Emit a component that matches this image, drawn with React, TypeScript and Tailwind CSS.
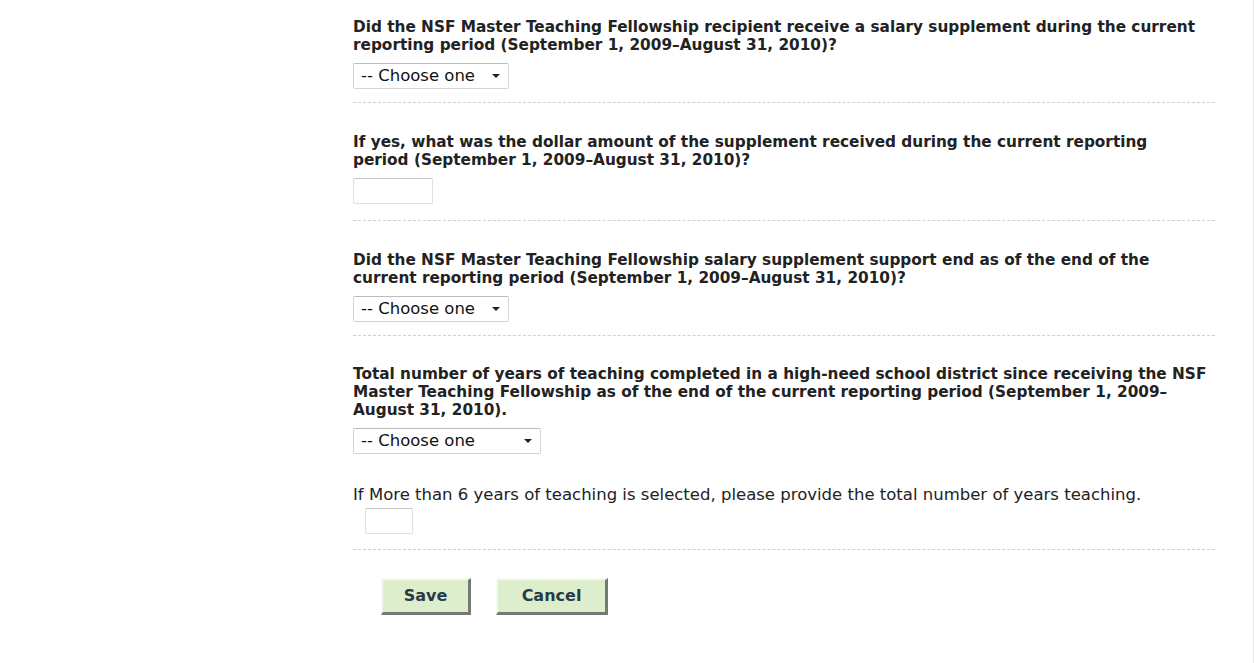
import React from "react";

// Fellowship salary questions – report form section

const FONT = { fontFamily: '"DejaVu Sans", Verdana, sans-serif' };

function ChooseSelect({ width }: { width: string }) {
  return (
    <div className={`relative h-[26px] ${width}`}>
      <select
        defaultValue=""
        className="h-full w-full appearance-none rounded-[2px] border border-[#d4d4d4] border-t-[#bdbdbd] bg-white pl-[7px] text-[16.5px] text-[#111] outline-none"
      >
        <option value="">-- Choose one</option>
        <option>Yes</option>
        <option>No</option>
      </select>
      <span className="pointer-events-none absolute right-[9px] top-[11px] h-0 w-0 border-x-[4px] border-t-[4px] border-x-transparent border-t-[#222]" />
    </div>
  );
}

function TextBox({ width }: { width: string }) {
  return (
    <input
      type="text"
      className={`h-[26px] ${width} rounded-[2px] border border-[#dde0e4] border-t-[#c4c4c4] bg-white outline-none`}
    />
  );
}

function Question({ children }: { children: React.ReactNode }) {
  return <p className="text-[15.3px] font-bold leading-[18px] text-[#222]">{children}</p>;
}

function FormButton({ label, width }: { label: string; width: string }) {
  return (
    <button
      className={`h-[37px] ${width} border-[2px] border-b-[3px] border-r-[3px] border-l-[#f4f9ee] border-t-[#f4f9ee] border-b-[#777] border-r-[#777] bg-[#ddeecc] text-[16px] font-bold text-[#2a3a48]`}
    >
      {label}
    </button>
  );
}

export default function App() {
  return (
    <div className="min-h-screen bg-white" style={FONT}>
      <div className="ml-[353px] w-[862px]">
        <div className="border-b border-dashed border-[#cfcfcf] pb-[13px] pt-[18px]">
          <Question>
            Did the NSF Master Teaching Fellowship recipient receive a salary supplement during the current
            reporting period (September 1, 2009–August 31, 2010)?
          </Question>
          <div className="mt-[9px]">
            <ChooseSelect width="w-[156px]" />
          </div>
        </div>

        <div className="border-b border-dashed border-[#cfcfcf] pb-[16px] pt-[30px]">
          <Question>
            If yes, what was the dollar amount of the supplement received during the current reporting
            <br />
            period (September 1, 2009–August 31, 2010)?
          </Question>
          <div className="mt-[9px] flex">
            <TextBox width="w-[80px]" />
          </div>
        </div>

        <div className="border-b border-dashed border-[#cfcfcf] pb-[13px] pt-[30px]">
          <Question>
            Did the NSF Master Teaching Fellowship salary supplement support end as of the end of the
            current reporting period (September 1, 2009–August 31, 2010)?
          </Question>
          <div className="mt-[9px]">
            <ChooseSelect width="w-[156px]" />
          </div>
        </div>

        <div className="border-b border-dashed border-[#cfcfcf] pb-[15px] pt-[29px]">
          <Question>
            Total number of years of teaching completed in a high-need school district since receiving the NSF
            Master Teaching Fellowship as of the end of the current reporting period (September 1, 2009–
            August 31, 2010).
          </Question>
          <div className="mt-[9px]">
            <ChooseSelect width="w-[188px]" />
          </div>
          <p className="mt-[32px] text-[16.5px] leading-[18px] text-[#222]">
            If More than 6 years of teaching is selected, please provide the total number of years teaching.
          </p>
          <div className="mt-[4px] flex pl-[12px]">
            <TextBox width="w-[48px]" />
          </div>
        </div>

        <div className="flex gap-[25px] pl-[28px] pt-[28px]">
          <FormButton label="Save" width="w-[90px]" />
          <FormButton label="Cancel" width="w-[112px]" />
        </div>
      </div>
      <div className="fixed right-0 top-0 h-full w-[1px] bg-[#e6e6e6]" />
    </div>
  );
}
